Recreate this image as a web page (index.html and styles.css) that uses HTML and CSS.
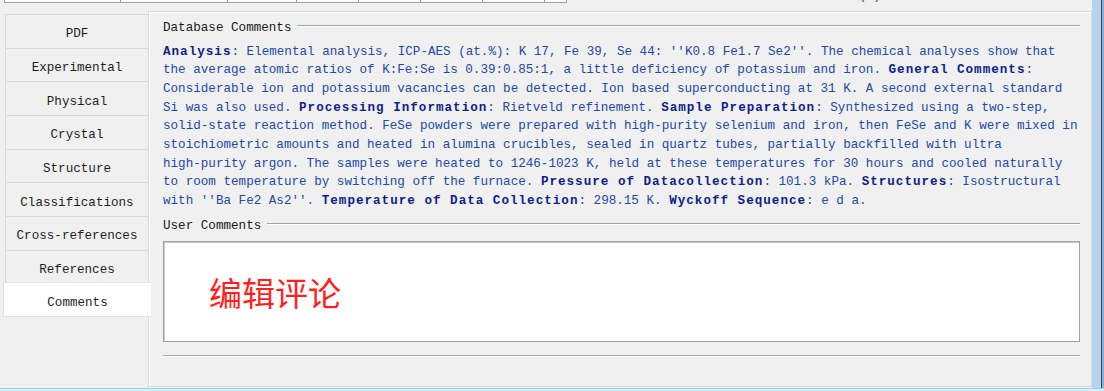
FILE: index.html
```html
<!DOCTYPE html>
<html>
<head>
<meta charset="utf-8">
<link rel="stylesheet" href="styles.css">
</head>
<body>
<div class="app">
  <div class="row">
    <div class="left">
      <div class="topstrip">
        <div class="cell w116"></div>
        <div class="cell w107"></div>
        <div class="cell w69"></div>
        <div class="cell w62"></div>
        <div class="cell w62"></div>
        <div class="cell w62"></div>
        <div class="cell w62"></div>
        <div class="cell w22"></div>
        <span class="paren">( )</span>
      </div>
      <div class="main">
        <div class="tabs">
          <div class="tab">PDF</div>
          <div class="tab">Experimental</div>
          <div class="tab">Physical</div>
          <div class="tab">Crystal</div>
          <div class="tab">Structure</div>
          <div class="tab">Classifications</div>
          <div class="tab">Cross-references</div>
          <div class="tab">References</div>
          <div class="tab active">Comments</div>
        </div>
        <div class="panel">
          <div class="heading"><span>Database Comments</span><span class="rule"></span></div>
          <p class="comments"><b>Analysis</b>: Elemental analysis, ICP-AES (at.%): K 17, Fe 39, Se 44: ''K0.8 Fe1.7 Se2''. The chemical analyses show that<br>the average atomic ratios of K:Fe:Se is 0.39:0.85:1, a little deficiency of potassium and iron. <b>General Comments</b>:<br>Considerable ion and potassium vacancies can be detected. Ion based superconducting at 31 K. A second external standard<br>Si was also used. <b>Processing Information</b>: Rietveld refinement. <b>Sample Preparation</b>: Synthesized using a two-step,<br>solid-state reaction method. FeSe powders were prepared with high-purity selenium and iron, then FeSe and K were mixed in<br>stoichiometric amounts and heated in alumina crucibles, sealed in quartz tubes, partially backfilled with ultra<br>high-purity argon. The samples were heated to 1246-1023 K, held at these temperatures for 30 hours and cooled naturally<br>to room temperature by switching off the furnace. <b>Pressure of Datacollection</b>: 101.3 kPa. <b>Structures</b>: Isostructural<br>with ''Ba Fe2 As2''. <b>Temperature of Data Collection</b>: 298.15 K. <b>Wyckoff Sequence</b>: e d a.</p>
          <div class="heading h2"><span>User Comments</span><span class="rule"></span></div>
          <div class="userbox"><span class="note">编辑评论</span></div>
          <div class="separator"></div>
        </div>
      </div>
    </div>
    <div class="frame">
      <div class="f1"></div>
      <div class="f2"></div>
      <div class="f3"></div>
    </div>
  </div>
  <div class="bottomline"></div>
</div>
</body>
</html>
```
FILE: styles.css
```css
html, body {
  margin: 0;
  padding: 0;
  background: #f0f0f0;
}
body {
  width: 1104px;
  height: 391px;
  overflow: hidden;
  font-family: "Liberation Mono", "DejaVu Sans Mono", monospace;
  font-size: 12.6px;
}
.app {
  display: flex;
  flex-direction: column;
  width: 1104px;
  height: 391px;
}
.row {
  display: flex;
  height: 388px;
}
.left {
  width: 1092px;
  display: flex;
  flex-direction: column;
}
.topstrip {
  height: 3px;
  display: flex;
  align-items: flex-start;
  padding-left: 4px;
  overflow: hidden;
}
.cell {
  height: 2px;
  background: #fbfbfb;
  border-left: 1px solid #a0a0a0;
  border-bottom: 1px solid #a0a0a0;
}
.cell:last-of-type { border-right: 1px solid #a0a0a0; }
.w116 { width: 115px; }
.w107 { width: 106px; }
.w69 { width: 68px; }
.w62 { width: 61px; }
.w22 { width: 21px; }
.paren {
  margin-left: 292px;
  margin-top: -10px;
  font-size: 12px;
  line-height: 12px;
  color: #444;
}
.main {
  height: 385px;
  display: flex;
  align-items: flex-start;
  padding-top: 8px;
  box-sizing: border-box;
}
.tabs {
  width: 148px;
  flex: none;
  padding-top: 3px;
  padding-left: 5px;
  box-sizing: border-box;
  display: flex;
  flex-direction: column;
}
.tab {
  height: 33.7px;
  box-sizing: border-box;
  border: 1px solid #dadada;
  border-right: none;
  border-bottom: none;
  padding-top: 6px;
  display: flex;
  align-items: center;
  justify-content: center;
  color: #1e1e1e;
  line-height: 16px;
  white-space: nowrap;
}
.tab.active {
  position: relative;
  z-index: 1;
  background: #ffffff;
  margin: -2px 0 0 -2px;
  width: 148px;
  height: 35px;
  padding-top: 7px;
  border: 1px solid #e2e2e2;
  border-right: none;
}
.panel {
  flex: 1;
  height: 376px;
  box-sizing: border-box;
  border: 1px solid #d9d9d9;
  box-shadow: inset 1px 1px 0 #ffffff;
  background: #f0f0f0;
  padding: 8px 11px 0 14px;
  display: flex;
  flex-direction: column;
}
.heading {
  display: flex;
  align-items: flex-start;
  height: 16px;
  line-height: 16px;
  color: #1a1a1a;
  white-space: nowrap;
}
.rule {
  flex: 1;
  margin-top: 5px;
  margin-left: 6px;
  border-top: 1px solid #a3a3a3;
  border-bottom: 1px solid #ffffff;
}
.h2 { margin-top: 7.2px; }
.comments {
  margin: 6.5px 0 0 0;
  line-height: 18.7px;
  color: #2249a6;
  white-space: nowrap;
}
.comments b {
  color: #0c1f8c;
  font-weight: bold;
  letter-spacing: 1px;
}
.userbox {
  margin-top: 7px;
  height: 101px;
  box-sizing: border-box;
  background: #ffffff;
  border: 1px solid #9ea2a7;
  box-shadow: inset 1px 1px 0 #c9c9c9;
  padding: 34px 0 0 45px;
}
.note {
  font-family: "Noto Sans CJK SC", "Noto Sans", sans-serif;
  font-size: 33px;
  line-height: 33px;
  color: #ff1f1f;
}
.separator {
  margin-top: 13px;
  border-top: 1px solid #a5a5a5;
  border-bottom: 1px solid #ffffff;
}
.frame {
  width: 12px;
  display: flex;
}
.f1 { width: 9px; background: #b9d1ea; }
.f2 { width: 1px; background: #34465a; }
.f3 { width: 2px; background: #8fb0d2; }
.bottomline {
  height: 3px;
  box-sizing: border-box;
  border-top: 1px solid #95d2f1;
  background: #d6eefa;
}
```
